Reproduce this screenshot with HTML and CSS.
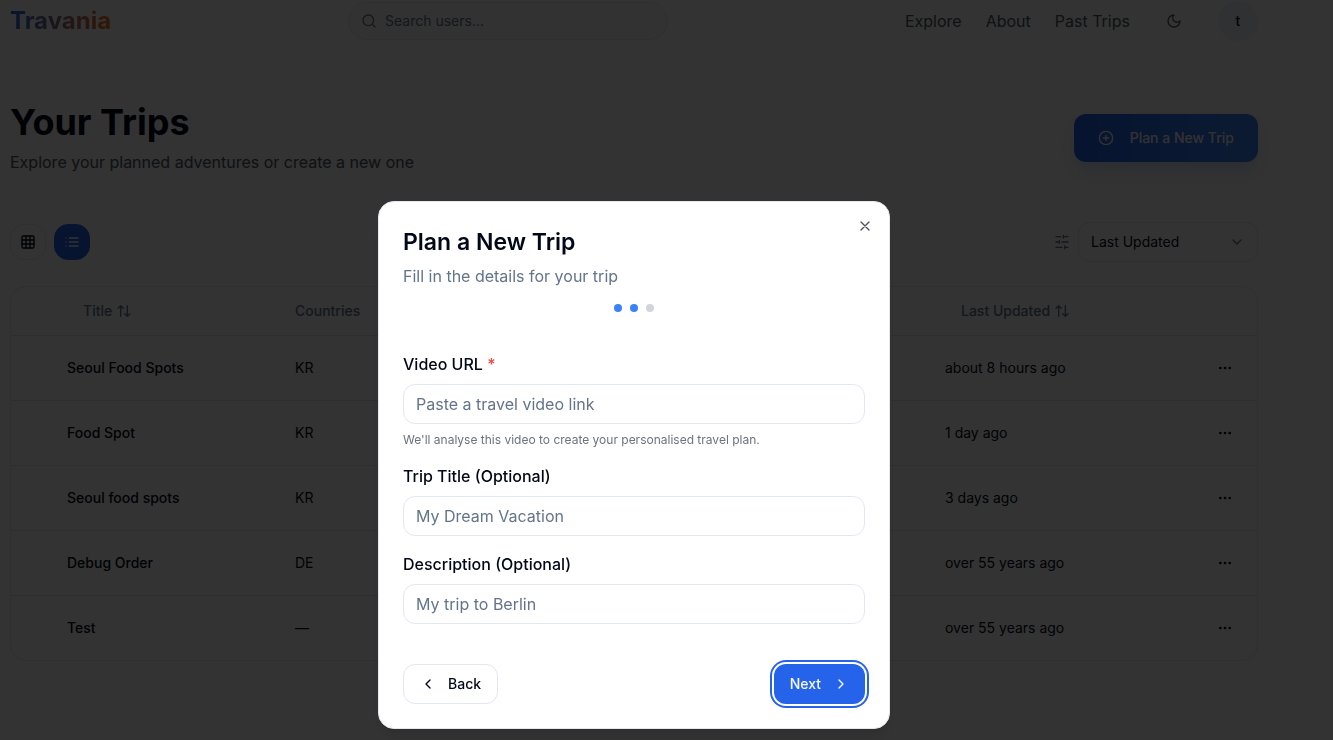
FILE: index.html
```html
<!DOCTYPE html>
<html lang="en">
<head>
    <meta charset="UTF-8">
    <meta name="viewport" content="width=device-width, initial-scale=1.0">
    <title>Travania - Your Trips</title>
    <link rel="stylesheet" href="styles.css">
</head>
<body>
    <!-- Header -->
    <header class="site-header">
        <a class="logo" href="#">Travania</a>
        <label class="search">
            <svg class="icon" viewBox="0 0 24 24"><circle cx="11" cy="11" r="8"/><path d="m21 21-4.3-4.3"/></svg>
            <input type="search" placeholder="Search users..." aria-label="Search users">
        </label>
        <nav class="main-nav">
            <a href="#">Explore</a>
            <a href="#">About</a>
            <a href="#">Past Trips</a>
            <button class="theme-button" aria-label="Toggle theme">
                <svg class="icon" viewBox="0 0 24 24"><path d="M12 3a6 6 0 0 0 9 9 9 9 0 1 1-9-9Z"/></svg>
            </button>
            <button class="avatar">t</button>
        </nav>
    </header>

    <main class="content">
        <div class="page-heading">
            <div>
                <h1>Your Trips</h1>
                <p>Explore your planned adventures or create a new one</p>
            </div>
            <button class="plan-button">
                <svg class="icon" viewBox="0 0 24 24"><circle cx="12" cy="12" r="10"/><path d="M8 12h8M12 8v8"/></svg>
                Plan a New Trip
            </button>
        </div>

        <!-- View toggle and sorting -->
        <div class="toolbar">
            <div class="view-toggle">
                <button class="view-button" aria-label="Grid view">
                    <svg class="icon" viewBox="0 0 24 24"><rect x="3" y="3" width="18" height="18" rx="2"/><path d="M3 9h18M3 15h18M9 3v18M15 3v18"/></svg>
                </button>
                <button class="view-button active" aria-label="List view">
                    <svg class="icon" viewBox="0 0 24 24"><path d="M3 6h.01M3 12h.01M3 18h.01M8 6h13M8 12h13M8 18h13"/></svg>
                </button>
            </div>
            <div class="sort">
                <svg class="icon" viewBox="0 0 24 24"><path d="M21 4h-7M10 4H3M21 12h-9M8 12H3M21 20h-5M12 20H3M14 2v4M8 10v4M16 18v4"/></svg>
                <div class="select-wrap">
                    <select aria-label="Sort trips by">
                        <option>Last Updated</option>
                        <option>Title</option>
                    </select>
                    <svg class="icon" viewBox="0 0 24 24"><path d="m6 9 6 6 6-6"/></svg>
                </div>
            </div>
        </div>

        <!-- Trips table -->
        <div class="table-card">
            <table>
                <thead>
                    <tr>
                        <th class="col-check"></th>
                        <th class="col-title">
                            <button class="sort-button">Title <svg class="icon" viewBox="0 0 24 24"><path d="m21 16-4 4-4-4M17 20V4M3 8l4-4 4 4M7 4v16"/></svg></button>
                        </th>
                        <th>Countries</th>
                        <th class="col-updated">
                            <button class="sort-button">Last Updated <svg class="icon" viewBox="0 0 24 24"><path d="m21 16-4 4-4-4M17 20V4M3 8l4-4 4 4M7 4v16"/></svg></button>
                        </th>
                        <th class="col-actions"></th>
                    </tr>
                </thead>
                <tbody>
                    <tr>
                        <td></td>
                        <td class="trip-title">Seoul Food Spots</td>
                        <td>KR</td>
                        <td>about 8 hours ago</td>
                        <td><button class="more-button" aria-label="More"><svg class="icon" viewBox="0 0 24 24"><circle cx="12" cy="12" r="1"/><circle cx="19" cy="12" r="1"/><circle cx="5" cy="12" r="1"/></svg></button></td>
                    </tr>
                    <tr>
                        <td></td>
                        <td class="trip-title">Food Spot</td>
                        <td>KR</td>
                        <td>1 day ago</td>
                        <td><button class="more-button" aria-label="More"><svg class="icon" viewBox="0 0 24 24"><circle cx="12" cy="12" r="1"/><circle cx="19" cy="12" r="1"/><circle cx="5" cy="12" r="1"/></svg></button></td>
                    </tr>
                    <tr>
                        <td></td>
                        <td class="trip-title">Seoul food spots</td>
                        <td>KR</td>
                        <td>3 days ago</td>
                        <td><button class="more-button" aria-label="More"><svg class="icon" viewBox="0 0 24 24"><circle cx="12" cy="12" r="1"/><circle cx="19" cy="12" r="1"/><circle cx="5" cy="12" r="1"/></svg></button></td>
                    </tr>
                    <tr>
                        <td></td>
                        <td class="trip-title">Debug Order</td>
                        <td>DE</td>
                        <td>over 55 years ago</td>
                        <td><button class="more-button" aria-label="More"><svg class="icon" viewBox="0 0 24 24"><circle cx="12" cy="12" r="1"/><circle cx="19" cy="12" r="1"/><circle cx="5" cy="12" r="1"/></svg></button></td>
                    </tr>
                    <tr>
                        <td></td>
                        <td class="trip-title">Test</td>
                        <td>—</td>
                        <td>over 55 years ago</td>
                        <td><button class="more-button" aria-label="More"><svg class="icon" viewBox="0 0 24 24"><circle cx="12" cy="12" r="1"/><circle cx="19" cy="12" r="1"/><circle cx="5" cy="12" r="1"/></svg></button></td>
                    </tr>
                </tbody>
            </table>
        </div>
    </main>

    <!-- New trip dialog -->
    <div class="overlay">
        <form class="dialog" role="dialog" aria-labelledby="dialog-title">
            <button type="button" class="close-button" aria-label="Close">
                <svg class="icon" viewBox="0 0 24 24"><path d="M18 6 6 18M6 6l12 12"/></svg>
            </button>
            <h2 id="dialog-title">Plan a New Trip</h2>
            <p class="dialog-text">Fill in the details for your trip</p>
            <div class="steps">
                <span class="step done"></span>
                <span class="step done"></span>
                <span class="step"></span>
            </div>

            <div class="fields">
                <div class="field">
                    <label for="video-url">Video URL <span class="required">*</span></label>
                    <input type="url" id="video-url" placeholder="Paste a travel video link">
                    <p class="hint">We'll analyse this video to create your personalised travel plan.</p>
                </div>
                <div class="field">
                    <label for="trip-title">Trip Title (Optional)</label>
                    <input type="text" id="trip-title" placeholder="My Dream Vacation">
                </div>
                <div class="field">
                    <label for="description">Description (Optional)</label>
                    <input type="text" id="description" placeholder="My trip to Berlin">
                </div>
            </div>

            <div class="dialog-actions">
                <button type="button" class="button">
                    <svg class="icon" viewBox="0 0 24 24"><path d="m15 18-6-6 6-6"/></svg>
                    Back
                </button>
                <button type="button" class="button primary">
                    Next
                    <svg class="icon" viewBox="0 0 24 24"><path d="m9 18 6-6-6-6"/></svg>
                </button>
            </div>
        </form>
    </div>
</body>
</html>
```
FILE: styles.css
```css
* {
    box-sizing: border-box;
}

body {
    margin: 0;
    min-height: 100vh;
    background-color: #fcfcfc;
    color: #020817;
    font-family: Inter, "Liberation Sans", sans-serif;
    font-size: 14px;
    line-height: 20px;
}

h1, h2, p {
    margin: 0;
}

a {
    color: inherit;
    text-decoration: none;
}

button, input, select {
    font: inherit;
    color: inherit;
}

button {
    display: inline-flex;
    align-items: center;
    justify-content: center;
    padding: 0;
    border: none;
    background: none;
    cursor: pointer;
}

.icon {
    flex: none;
    width: 16px;
    height: 16px;
    fill: none;
    stroke: currentColor;
    stroke-width: 2;
    stroke-linecap: round;
    stroke-linejoin: round;
}

/* Header */
.site-header {
    display: flex;
    align-items: center;
    justify-content: space-between;
    padding: 1px 75px 12px 10px;
    background-color: #fff;
}

.logo {
    font-size: 24px;
    font-weight: 700;
    line-height: 32px;
    color: transparent;
    background: linear-gradient(to right, #2563eb, #f97316);
    background-clip: text;
    -webkit-background-clip: text;
}

.search {
    display: flex;
    align-items: center;
    gap: 8px;
    width: 320px;
    height: 38px;
    padding: 0 12px;
    border: 1px solid #e5e7eb;
    border-radius: 20px;
    background-color: #f9fafb;
    color: #64748b;
}

.search input {
    flex: 1;
    min-width: 0;
    padding: 0;
    border: none;
    outline: none;
    background: none;
}

input::placeholder {
    color: #64748b;
    opacity: 1;
}

.main-nav {
    display: flex;
    align-items: center;
    gap: 24px;
    font-size: 16px;
    line-height: 24px;
    color: #4b5563;
}

.theme-button, .avatar {
    width: 40px;
    height: 40px;
    border-radius: 50%;
}

.avatar {
    background-color: #f1f5f9;
    color: #020817;
    font-size: 14px;
    font-weight: 500;
}

/* Page */
.content {
    padding: 49px 75px 48px 10px;
}

.page-heading, .toolbar {
    display: flex;
    align-items: center;
    justify-content: space-between;
}

.page-heading h1 {
    margin-bottom: 8px;
    font-size: 36px;
    font-weight: 700;
    line-height: 40px;
}

.page-heading p {
    font-size: 16px;
    line-height: 24px;
    color: #4b5563;
}

.plan-button {
    gap: 16px;
    height: 48px;
    padding: 0 24px;
    border-radius: 12px;
    background: linear-gradient(to right, #2563eb, #3b82f6);
    box-shadow: 0 10px 15px -3px rgba(37, 99, 235, 0.2);
    color: #f8fafc;
    font-weight: 500;
}

.toolbar {
    margin: 48px 0 24px;
}

.view-toggle, .sort {
    display: flex;
    align-items: center;
    gap: 8px;
}

.view-button {
    width: 36px;
    height: 36px;
    border: 1px solid #e2e8f0;
    border-radius: 14px;
    background-color: #fff;
}

.view-button.active {
    border-color: #2563eb;
    background-color: #2563eb;
    color: #f8fafc;
}

.sort {
    color: #64748b;
}

.select-wrap {
    display: grid;
    align-items: center;
    width: 180px;
}

.select-wrap select, .select-wrap .icon {
    grid-area: 1 / 1;
}

.select-wrap select {
    appearance: none;
    height: 40px;
    padding: 0 12px;
    border: 1px solid #e2e8f0;
    border-radius: 12px;
    background-color: #fff;
    color: #020817;
}

.select-wrap .icon {
    justify-self: end;
    margin-right: 13px;
    pointer-events: none;
}

/* Trips table */
.table-card {
    border: 1px solid #e2e8f0;
    border-radius: 16px;
    background-color: #fff;
}

table {
    width: 100%;
    border-collapse: separate;
    border-spacing: 0;
    table-layout: fixed;
}

th, td {
    padding: 0 16px;
    border-bottom: 1px solid #dde3eb;
    text-align: left;
}

th {
    height: 49px;
    color: #64748b;
    font-weight: 500;
}

td {
    height: 65px;
}

tbody tr:last-child td {
    height: 64px;
    border-bottom: none;
}

.col-check {
    width: 40px;
}

.col-title {
    width: 228px;
}

.col-updated {
    width: 264px;
}

.col-actions {
    width: 64px;
}

.sort-button {
    gap: 4px;
    height: 40px;
    padding: 0 16px;
}

.trip-title {
    font-weight: 500;
}

.more-button {
    width: 32px;
    height: 32px;
}

.more-button .icon {
    fill: currentColor;
}

/* New trip dialog */
.overlay {
    position: fixed;
    inset: 0;
    display: flex;
    align-items: flex-start;
    justify-content: center;
    padding: 201px 65px 0 0;
    background-color: rgba(0, 0, 0, 0.8);
}

.dialog {
    position: relative;
    width: 100%;
    max-width: 512px;
    padding: 24px;
    border: 1px solid #e2e8f0;
    border-radius: 16px;
    background-color: #fff;
    box-shadow: 0 10px 15px -3px rgba(0, 0, 0, 0.1), 0 4px 6px -4px rgba(0, 0, 0, 0.1);
    font-size: 16px;
    line-height: 24px;
}

.close-button {
    position: absolute;
    top: 16px;
    right: 16px;
    color: #4e525d;
}

.dialog h2 {
    margin-bottom: 6px;
    font-size: 23px;
    font-weight: 600;
    line-height: 32px;
}

.dialog-text {
    color: #64748b;
}

.steps {
    display: flex;
    justify-content: center;
    gap: 8px;
    margin: 16px 0 40px;
}

.step {
    width: 8px;
    height: 8px;
    border-radius: 50%;
    background-color: #d1d5db;
}

.step.done {
    background-color: #3b82f6;
}

.fields {
    display: flex;
    flex-direction: column;
    gap: 16px;
}

.field {
    display: flex;
    flex-direction: column;
    gap: 8px;
}

.field label {
    font-weight: 500;
}

.required {
    color: #ef4444;
}

.field input {
    width: 100%;
    height: 40px;
    padding: 0 12px;
    border: 1px solid #e2e8f0;
    border-radius: 12px;
    background-color: #fff;
}

.hint {
    font-size: 12px;
    line-height: 16px;
    color: #6b7280;
}

.dialog-actions {
    display: flex;
    justify-content: space-between;
    margin-top: 40px;
}

.button {
    gap: 12px;
    height: 40px;
    padding: 0 16px;
    border: 1px solid #e2e8f0;
    border-radius: 12px;
    font-size: 14px;
    font-weight: 500;
}

.button.primary {
    border: none;
    background-color: #2563eb;
    box-shadow: 0 0 0 2px #fff, 0 0 0 4px #2563eb;
    color: #f8fafc;
}
```
